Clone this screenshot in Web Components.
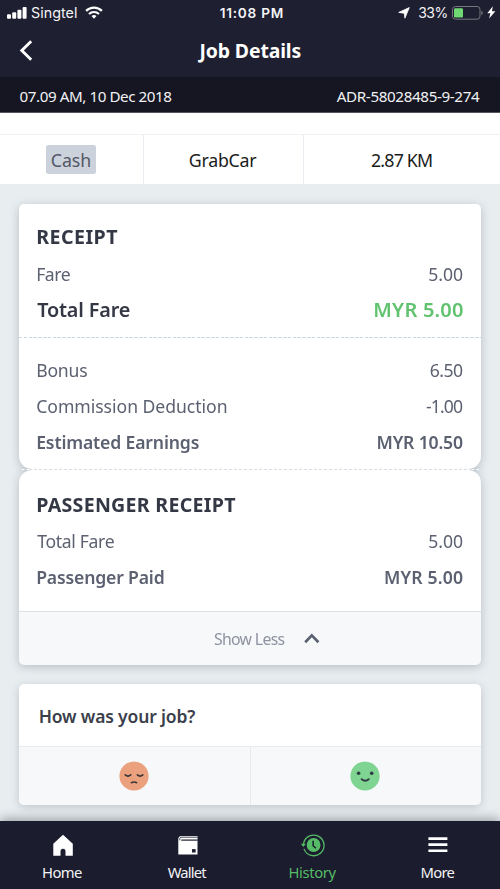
<!DOCTYPE html>
<html lang="en">
<head>
<meta charset="utf-8">
<title>Job Details</title>
<style>
html,body{margin:0;padding:0}
body{width:500px;height:889px;overflow:hidden;font-family:"Noto Sans","Open Sans",sans-serif;background:#e8edf0}
</style>
</head>
<body>
<job-app></job-app>
<script>
const define=(name,html,setup)=>{
  const t=document.createElement('template');t.innerHTML=html;
  customElements.define(name,class extends HTMLElement{
    constructor(){super();this.attachShadow({mode:'open'}).append(t.content.cloneNode(true));}
    connectedCallback(){if(setup)setup(this,this.shadowRoot);}
  });
};

/* A line of text tracked to a given ink width: w = width, s = size, b = weight */
const pen=document.createElement('canvas').getContext('2d');
define('fit-text',`<style>:host{display:block;flex:none;white-space:nowrap;line-height:24px}span{display:inline-block}</style><span></span>`,(el,root)=>{
  const w=+el.getAttribute('w'),s=+el.getAttribute('s')||17.6,b=el.getAttribute('b')||'400',text=el.getAttribute('text');
  const fam=el.hasAttribute('sys')?'Inter, sans-serif':'"Noto Sans", "Open Sans", sans-serif';
  const span=root.querySelector('span');
  span.textContent=text;
  pen.font=`${b} ${s}px ${fam}`;
  const m=pen.measureText(text),ink=m.actualBoundingBoxLeft+m.actualBoundingBoxRight;
  el.style.width=w+'px';el.style.font=`${b} ${s}px/24px ${fam}`;
  span.style.letterSpacing=((w-ink)/(text.length-1)).toFixed(3)+'px';
  span.style.marginLeft=m.actualBoundingBoxLeft.toFixed(2)+'px';
});

define('status-bar',`<style>
:host{display:grid;grid-template-columns:1fr auto 1fr;align-items:center;height:25px;color:#f4f4f6;padding:0 4.5px 0 7px}
.l,.r{display:flex;align-items:center}.r{justify-content:flex-end}svg{display:block;flex:none}
#carrier{margin-left:4px}#wifi{margin-left:8px}
</style>
<div class="l"><svg width="20" height="12" viewBox="0 0 20 12" fill="#fff"><rect x="0" y="7.2" width="4" height="4.5" rx="1"/><rect x="5.2" y="5.2" width="4" height="6.5" rx="1"/><rect x="10.4" y="2.8" width="4" height="8.9" rx="1"/><rect x="15.6" y="0" width="4" height="11.7" rx="1"/></svg>
<fit-text sys text="Singtel" w="46" s="14.3" id="carrier"></fit-text>
<svg id="wifi" width="18" height="13" viewBox="0 0 18 13" fill="none" stroke="#fff" stroke-width="2.2"><path d="M1.1 4.9a11.3 11.3 0 0 1 15.8 0"/><path d="M4 8a7.2 7.2 0 0 1 10 0"/><path d="M9 12.7 6.5 10.1a3.7 3.7 0 0 1 5 0z" fill="#fff" stroke="none"/></svg></div>
<fit-text sys text="11:08 PM" w="63" s="13.6" b="600"></fit-text>
<div class="r"><svg width="12" height="12" viewBox="0 0 12 12" fill="#fff" stroke="#fff" stroke-width=".8" stroke-linejoin="round"><path d="M11.3.6 6.9 11.2 6.3 6.3.7 5.4z"/></svg>
<div style="width:8px"></div><fit-text sys text="33%" w="29.3" s="14"></fit-text><div style="width:4.5px"></div>
<svg width="31" height="14" viewBox="0 0 31 14"><rect x=".5" y=".5" width="27.5" height="12.7" rx="3" fill="none" stroke="#77777f"/><path d="M29.3 4.8v4.2q1.5-.6 1.5-2.1t-1.5-2.1z" fill="#77777f"/><rect x="2" y="2.2" width="9" height="9.3" rx="1.2" fill="#70d873"/></svg>
<div style="width:3.5px"></div><svg width="9" height="13" viewBox="0 0 9 13" fill="#fff"><path d="M5.8.3.3 7.2h3.1L2.1 12.6 8.4 5.3H5z"/></svg></div>`);

define('title-bar',`<style>:host{display:grid;grid-template-columns:1fr auto 1fr;align-items:center;height:52px;padding:0 21px 0 19px}svg{display:block}</style>
<svg width="14" height="22" viewBox="0 0 14 22" fill="none" stroke="#fff" stroke-width="2.9"><path d="M12.2 1.3 2.8 10.5l9.4 9.2"/></svg><fit-text text="Job Details" w="103" s="19.4" b="700"></fit-text><i></i>`);

define('date-bar',`<style>:host{display:flex;justify-content:space-between;align-items:center;height:36px;box-sizing:border-box;padding:2px 20px 0 19.5px;background:#151621;color:#f2f2f4;border-bottom:.5px solid #55565f}</style>
<fit-text text="07.09 AM, 10 Dec 2018" w="151.8" s="15.2"></fit-text><fit-text text="ADR-58028485-9-274" w="143.3" s="15.2"></fit-text>`);

define('trip-facts',`<style>
:host{display:block;background:#fff;padding-top:21px;color:#1b1c20}
.g{display:grid;grid-template-columns:144px 160px 1fr;height:50px;box-sizing:border-box;border-top:1.5px solid #f0f1f3}
.g>div{display:flex;align-items:center;justify-content:center;border-right:1px solid #e9edf1}.g>div:last-child{border:0}
.chip{background:#ccd2dc;color:#535766;border-radius:2.5px;height:29px;width:50px;display:flex;align-items:center;justify-content:center}
</style><div class="g"><div style="padding-right:1px"><div class="chip"><fit-text text="Cash" w="38.5" s="17.8"></fit-text></div></div><div><fit-text text="GrabCar" w="67.5" s="17.8"></fit-text></div><div style="padding-right:1px"><fit-text text="2.87 KM" w="61" s="17.8"></fit-text></div></div>`);

define('fare-row',`<style>:host{display:flex;justify-content:space-between;align-items:center;padding:0 17.5px 0 18.2px;height:36px;color:#5c6171}</style><slot></slot>`);

define('receipt-card',`<style>
:host{display:block;margin:0 19.5px 0 19px;filter:drop-shadow(0 2px 5px rgba(70,82,92,.3))}
section{background:#fff;box-sizing:border-box}
.a{height:265px;padding-top:14px;border-radius:5px 5px 13px 13px}
.b{height:141px;padding-top:16px;border-radius:13px 13px 0 0}
.dash{height:1px;margin-top:10px;margin-bottom:14px;background:repeating-linear-gradient(90deg,#cfd8df 0 3.5px,#fff 3.5px 4.8px)}
.tear{height:1px;background:repeating-linear-gradient(90deg,#d8dee5 0 3.4px,#fff 3.4px 5px)}
.h{height:37px;color:#343845}.strong{color:#343845;height:35px}
.foot{height:54px;box-sizing:border-box;padding-left:34px;border-top:1px solid #dbe1e7;background:#f6f8fa;border-radius:0 0 5px 5px;color:#8f93a0;display:flex;align-items:center;justify-content:center;gap:19px}
.foot svg{display:block}
</style>
<section class="a">
<fare-row class="h"><fit-text text="RECEIPT" w="80" s="19.6" b="700"></fit-text></fare-row>
<fare-row style="height:37px"><fit-text text="Fare" w="33.5"></fit-text><fit-text text="5.00" w="33.7"></fit-text></fare-row>
<fare-row class="strong"><fit-text text="Total Fare" w="92.5" s="19.8" b="600"></fit-text><div style="color:#61c36f"><fit-text text="MYR 5.00" w="88.7" s="20" b="600"></fit-text></div></fare-row>
<div class="dash"></div>
<fare-row><fit-text text="Bonus" w="50"></fit-text><fit-text text="6.50" w="33.3"></fit-text></fare-row>
<fare-row style="height:36px"><fit-text text="Commission Deduction" w="189.5"></fit-text><fit-text text="-1.00" w="37"></fit-text></fare-row>
<fare-row><fit-text text="Estimated Earnings" w="161.5" b="600"></fit-text><fit-text text="MYR 10.50" w="85.5" b="600"></fit-text></fare-row>
</section>
<div class="tear"></div>
<section class="b">
<fare-row class="h"><fit-text text="PASSENGER RECEIPT" w="198" s="19.6" b="700"></fit-text></fare-row>
<fare-row><fit-text text="Total Fare" w="77.5"></fit-text><fit-text text="5.00" w="33.7"></fit-text></fare-row>
<fare-row><fit-text text="Passenger Paid" w="126.5" b="600"></fit-text><fit-text text="MYR 5.00" w="78" b="600"></fit-text></fare-row>
</section>
<div class="foot"><fit-text text="Show Less" w="70.7" s="15.8"></fit-text><svg width="16" height="11" viewBox="0 0 16 11" fill="none" stroke="#5c6171" stroke-width="2.7"><path d="m1.2 9.3 6.6-6.9 6.6 6.9"/></svg></div>`);

define('rating-card',`<style>
:host{display:block;margin:19px 19.5px 0 19px;border-radius:5px;background:#fff;box-shadow:0 2px 8px rgba(70,82,92,.26);overflow:hidden;height:121px}
.q{height:62px;display:flex;align-items:center;padding:2px 20.7px 0;box-sizing:border-box;color:#3b3f4b}
.o{display:grid;grid-template-columns:1fr 1fr;height:59px;border-top:1.5px solid #e8ecf1;box-sizing:border-box;background:#f6f8fa}
.o div{display:flex;align-items:center;justify-content:center}.o div+div{border-left:1px solid #e6e9ee}
svg{display:block}
</style>
<div class="q"><fit-text text="How was your job?" w="155.5" s="17.5" b="600"></fit-text></div>
<div class="o"><div><svg width="30" height="30" viewBox="0 0 30 30" fill="none" stroke="#38343a" stroke-width="1.7" stroke-linecap="round"><circle cx="15" cy="15" r="14.6" fill="#eba17d" stroke="none"/><path d="M6.3 13.9q2.7 2.4 5.4 0M18.4 13.9q2.7 2.4 5.4 0M12.4 21.7q2.7-1.4 5.2 0"/></svg></div>
<div style="padding-right:2px"><svg width="30" height="30" viewBox="0 0 30 30" fill="#303b43"><circle cx="15" cy="15" r="14.6" fill="#7fd491"/><circle cx="8.6" cy="12.3" r="1.8"/><circle cx="21.7" cy="12.3" r="1.8"/><path d="M11.7 18.2q3.5 3 7 0" fill="none" stroke="#303b43" stroke-width="2" stroke-linecap="round"/></svg></div></div>`);

define('nav-item',`<style>:host{display:flex;flex-direction:column;align-items:center;color:#f4f4f6}::slotted(svg){display:block;height:24px;width:26px}</style><slot></slot>`);

define('bottom-nav',`<style>
:host{display:grid;grid-template-columns:repeat(4,1fr);height:68px;box-sizing:border-box;padding-top:12px;background:#1b1c2e;box-shadow:0 -2px 10px rgba(30,38,45,.4);position:relative}
fit-text{margin-top:3px}
</style>
<nav-item><svg viewBox="0 0 26 24" fill="#fff"><path d="m13 1.8 9.8 9V22.7h-7.3v-4.4a2.5 2.5 0 0 0-5 0v4.4H3.3V10.8z"/></svg><fit-text text="Home" w="39" s="14.8"></fit-text></nav-item>
<nav-item><svg viewBox="0 0 26 24"><path fill="#fff" d="M3.3 6.2a3.4 3.4 0 0 1 3.4-3.3h15.8v18.6H3.3z"/><path d="M22.6 4.2H7q-2.2 0-2.2 1.5V7.3" fill="none" stroke="#1b1c2e" stroke-width=".8"/><path d="M6.3 7.1h16.3" stroke="#1b1c2e" stroke-width="1.2"/><rect x="17" y="16.1" width="3.6" height="3.4" fill="#1b1c2e"/></svg><fit-text text="Wallet" w="39.5" s="14.8"></fit-text></nav-item>
<nav-item style="color:#55bb66"><svg viewBox="0 0 26 24"><path d="M3.5 10.9A10.3 10.3 0 1 1 4 15.9" fill="none" stroke="#55bb66" stroke-width="1.3"/><path d="M.8 10.7h5l-2.4 3.4z" fill="#55bb66"/><circle cx="13.6" cy="12" r="6.9" fill="#55bb66"/><path d="M13.1 7.8v4.9l2.9 2.5" fill="none" stroke="#1b1c2e" stroke-width="1.5"/></svg><fit-text text="History" w="47.2" s="14.8" style="padding-left:1px"></fit-text></nav-item>
<nav-item><svg viewBox="0 0 26 24" fill="#fff"><path d="M3.4 4.3h19v2.6h-19zM3.4 10.3h19v2.6h-19zM3.4 16.4h19V19h-19z"/></svg><fit-text text="More" w="33" s="14.8" style="padding-left:1px"></fit-text></nav-item>`);

define('job-app',`<style>
:host{display:flex;flex-direction:column;width:500px;height:889px;background:#e8edf0}
header{background:#1e1f31;color:#fff}
main{flex:1;padding-top:20px;min-height:0}
</style>
<header><status-bar></status-bar><title-bar></title-bar><date-bar></date-bar></header>
<trip-facts></trip-facts>
<main><receipt-card></receipt-card><rating-card></rating-card></main>
<bottom-nav></bottom-nav>`);
</script>
</body>
</html>
